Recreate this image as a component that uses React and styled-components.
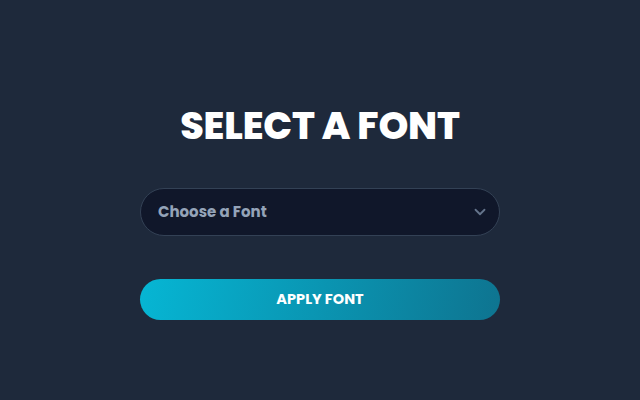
import React, { useState } from 'react';
import styled, { createGlobalStyle } from 'styled-components';

const GlobalStyle = createGlobalStyle`
  html, body, #root {
    margin: 0;
    height: 100%;
  }
  body {
    background: #1e293b;
    font-family: Poppins, Inter, 'Noto Sans', sans-serif;
  }
`;

const fonts = ['Inter', 'Roboto', 'Lato', 'Open Sans', 'Noto Sans'];

const App = () => {
  const [font, setFont] = useState('');

  return (
    <>
      <GlobalStyle />
      <Wrapper>
        <Title>SELECT A FONT</Title>
        <SelectBox>
          <Select value={font} onChange={(e) => setFont(e.target.value)}>
            <option value="">Choose a Font</option>
            {fonts.map((f) => (
              <option key={f} value={f}>
                {f}
              </option>
            ))}
          </Select>
          <Chevron width="18" height="18" viewBox="0 0 24 24">
            <path d="M6 9l6 6 6-6" />
          </Chevron>
        </SelectBox>
        <ApplyButton type="button">APPLY FONT</ApplyButton>
      </Wrapper>
    </>
  );
};

const Wrapper = styled.main`
  display: flex;
  flex-direction: column;
  align-items: center;
  justify-content: center;
  height: 100%;
  padding-top: 26px;
  box-sizing: border-box;
`;

const Title = styled.h1`
  margin: 0 0 43px;
  color: #ffffff;
  font-size: 38px;
  font-weight: 800;
  letter-spacing: -0.2px;
  line-height: 1;
`;

const SelectBox = styled.div`
  position: relative;
  width: 360px;
  margin-bottom: 43px;
`;

const Select = styled.select`
  appearance: none;
  width: 100%;
  height: 48px;
  padding: 0 40px 0 17px;
  background: #10172a;
  border: 1px solid #334155;
  border-radius: 24px;
  color: #94a3b8;
  font-family: inherit;
  font-size: 15px;
  font-weight: 700;
  outline: none;
  cursor: pointer;
`;

const Chevron = styled.svg`
  position: absolute;
  right: 11px;
  top: 15px;
  fill: none;
  stroke: #64748b;
  stroke-width: 2.4;
  stroke-linecap: round;
  stroke-linejoin: round;
  pointer-events: none;
`;

const ApplyButton = styled.button`
  width: 360px;
  height: 41px;
  border: none;
  border-radius: 21px;
  background: linear-gradient(100deg, #06b6d4, #0e7490);
  color: #ffffff;
  font-family: inherit;
  font-size: 14.5px;
  font-weight: 700;
  cursor: pointer;
`;

export default App;
